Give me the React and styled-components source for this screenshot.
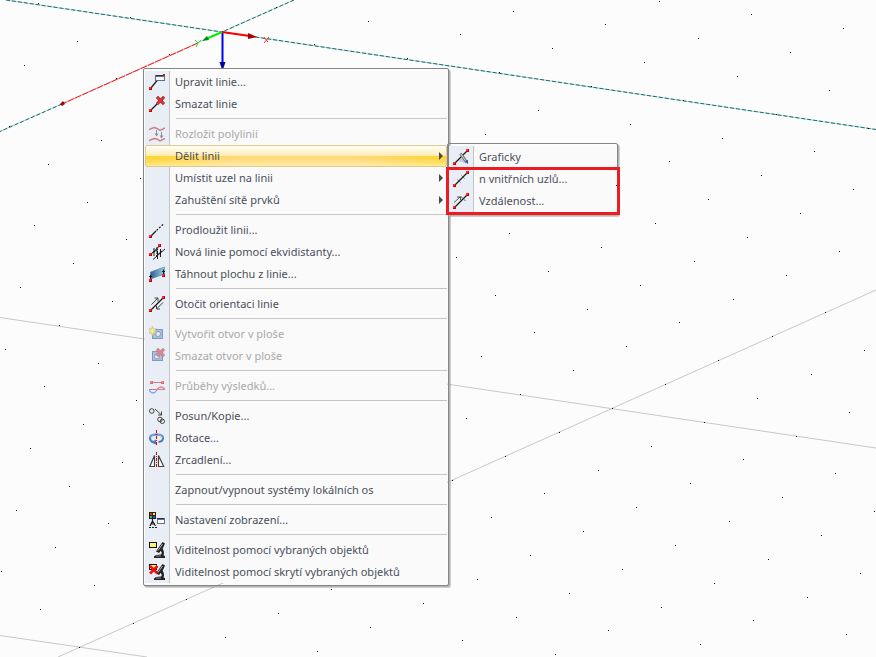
import React, { useState } from "react";
import styled, { createGlobalStyle } from "styled-components";

const GlobalStyle = createGlobalStyle`
  * {
    box-sizing: border-box;
  }
  body {
    margin: 0;
    background: #fcfcfc;
    font-family: "Noto Sans", "Open Sans", sans-serif;
    font-size: 11px;
  }
`;

const Workspace = styled.main`
  position: relative;
  min-height: 100vh;
  overflow: hidden;
  background: #fcfcfc;
`;

const Scene = styled.svg`
  position: absolute;
  top: 0;
  left: 0;
  width: 100%;
  height: 100%;
`;

const MenuPanel = styled.div`
  position: absolute;
  top: ${(p) => p.$top}px;
  left: ${(p) => p.$left}px;
  min-width: ${(p) => p.$minWidth}px;
  padding: 2px 1px;
  border: 1px solid #868686;
  border-radius: 2px;
  background: linear-gradient(
      to right,
      #e9edf6 24px,
      #c5c5c5 24px,
      #c5c5c5 25px,
      transparent 25px
    )
    content-box #fafafa;
  box-shadow: 1px 1px 0 #b4b4b4, 2px 2px 0 rgba(0, 0, 0, 0.18);
`;

const Item = styled.button`
  display: flex;
  align-items: center;
  width: 100%;
  height: 22px;
  padding: 0 4px;
  border: 1px solid transparent;
  border-width: 1px 0;
  border-radius: 2px;
  background: none;
  color: #4b4f5a;
  font: inherit;
  line-height: 16px;
  text-align: left;
  white-space: nowrap;

  &:disabled {
    color: #a9a9a9;
  }
  ${(p) =>
    p.$active &&
    `
    border: 1px solid #dccb8e;
    padding: 0 3px;
    background:
      linear-gradient(to bottom, #fffef8, #ffedb5 48%, transparent 48%),
      linear-gradient(to bottom, transparent 60%, rgba(255, 246, 200, 0.6)),
      linear-gradient(to right, #ffd42e, #ffd878 28%, #ffd878 72%, #ffd42e);
  `}
`;

const IconBox = styled.svg`
  flex: none;
  width: 16px;
  height: 16px;
  margin-right: 10px;
  opacity: ${(p) => (p.$dim ? 0.55 : 1)};
`;

const Label = styled.span`
  flex: 1;
`;

const Arrow = styled.svg`
  flex: none;
  width: 4px;
  height: 8px;
`;

const Separator = styled.hr`
  height: 1px;
  margin: 3px 0 4px 31px;
  border: 0;
  background: #c5c5c5;
`;

const Marker = styled.div`
  position: absolute;
  top: 167px;
  left: 446px;
  width: 174px;
  height: 48px;
  border: 3px solid #ed1c24;
  pointer-events: none;
`;

const Node = ({ x, y }) => (
  <g shapeRendering="crispEdges">
    <rect x={x} y={y} width="3" height="3" fill="#c80000" />
    <rect x={x} y={y} width="2" height="2" fill="#ff2a2a" />
  </g>
);

const Line = ({ d, c = "#1c1c1c", w = 1, ...rest }) => (
  <path d={d} stroke={c} strokeWidth={w} fill="none" {...rest} />
);

const Cross = ({ x, y, s = 7 }) => (
  <g>
    <Line d={`M${x} ${y}l${s} ${s}m0 ${-s}l${-s} ${s}`} c="#7d1a1e" w={3} />
    <Line d={`M${x} ${y}l${s} ${s}m0 ${-s}l${-s} ${s}`} c="#e0343a" w={1.8} />
  </g>
);

const Microscope = () => (
  <g>
    <path d="M13.5 0l2.5 1.5-2 4.500-4 5-3-1.500 3-4.500z" fill="#222" />
    <path d="M13.5 2L9 8.500" stroke="#b5b5b5" fill="none" />
    <path d="M13 6q3 3.500 1.500 7.500L16 14v2H5v-1.500l2-1.500 5-.5q1.500-2-.5-4z" fill="#222" />
    <path d="M7 14h5" stroke="#8d8d8d" fill="none" />
  </g>
);

const icons = {
  edit: (
    <>
      <Line d="M1.5 14.5L8.5 6" w={1.2} />
      <g shapeRendering="crispEdges">
        <rect x="6" y="1" width="10" height="6" fill="#666b78" />
        <rect x="7" y="3" width="8" height="3" fill="#f4f6fb" />
        <rect x="7" y="1" width="7" height="1" fill="#303068" />
        <rect x="14" y="0" width="2" height="2" fill="#b3202a" />
      </g>
      <Node x={0} y={13} />
    </>
  ),
  remove: (
    <>
      <Line d="M1.5 14.5L15 1" w={1.2} />
      <Cross x={8} y={1} />
      <Node x={0} y={13} />
    </>
  ),
  explode: (
    <>
      <Line d="M0 3.5L5 1.5l3 1 3 2L16 2M0 14.5l5-2 3 .5 3 2L16 12.5" c="#b5262c" w={1.5} />
      <Line d="M7.5 4v6M12.5 6v6" c="#444" />
      <path d="M5.5 7.500h4l-2 3zM10.5 9.500h4l-2 3z" fill="#444" />
    </>
  ),
  extend: (
    <>
      <Line d="M1.5 14.5L7 9" w={1.2} />
      <Line d="M7.500 8.500L14.5 2" w={1.2} strokeDasharray="2 1.5" />
      <Node x={0} y={13} />
    </>
  ),
  offset: (
    <>
      <Line d="M1.5 10.5L11 1.5M4 15.5L16 5" />
      <Line d="M5 4v8M8 3v7M8.500 7v8M11.5 5v8M3.5 9L9 5M7 12l6-5" />
      <Node x={0} y={9} />
      <Node x={9} y={0} />
    </>
  ),
  extrude: (
    <>
      <defs>
        <linearGradient id="plane">
          <stop offset="0" stopColor="#315a94" />
          <stop offset="1" stopColor="#8fd8f2" />
        </linearGradient>
      </defs>
      <path d="M1.5 6L15.5 1v7L1.5 13z" fill="url(#plane)" stroke="#60788c" strokeWidth=".6" />
      <Line d="M1.5 13V9M0 10.5h3M14.5 8V3.5M13 5.5h3" />
      <Node x={0} y={13} />
      <Node x={13} y={8} />
    </>
  ),
  reverse: (
    <>
      <Line d="M1.5 14.5L14.5 1.5" w={1.2} />
      <Line d="M2.5 8.5L9 2M5.5 2H9v3.5M14 6.5L7.5 13M11 13H7.5V9.5" c="#444" />
      <Node x={0} y={13} />
      <Node x={13} y={0} />
    </>
  ),
  opening: (
    <>
      <rect x="3.5" y="3.5" width="10" height="9" fill="#7596c8" stroke="#37568a" />
      <circle cx="9" cy="8" r="2.5" fill="#e4ebf8" stroke="#37568a" />
      <path d="M3.5 0l1 3 3-.5-2 2.3 2 2.7-3-.8-1.2 2.8-1-2.800L0 7.500l1.3-2.700L0 2.300l2.600.7z" fill="#ffee3c" stroke="#9c8d2b" strokeWidth=".6" />
    </>
  ),
  openingRemove: (
    <>
      <rect x="3.5" y="3.5" width="10" height="9" fill="#7596c8" stroke="#37568a" />
      <circle cx="8" cy="8.500" r="2.5" fill="#e4ebf8" stroke="#37568a" />
      <Cross x={8} y={1} />
    </>
  ),
  results: (
    <>
      <Line d="M1 4.5H15M0 11.5H16" c="#b52a30" />
      <Line d="M0 12q4 6 8 0" c="#3a4cff" w={1.3} />
      <Line d="M8 11.5q4-5 8 0" c="#e53238" w={1.3} />
      <Node x={1} y={3} />
      <Node x={12} y={3} />
    </>
  ),
  move: (
    <>
      <g fill="none" stroke="#444">
        <circle cx="2.8" cy="3" r="2.3" />
        <circle cx="11" cy="11.5" r="2.3" />
        <circle cx="13.3" cy="13.3" r="2.2" />
      </g>
      <Line d="M6 1L12.5 7M12.5 3.5V7H9" c="#444" />
    </>
  ),
  rotate: (
    <>
      <Line d="M4 12Q1 11 1 8q0-3.500 6.500-3.500T14 8q0 3.500-4.500 4" c="#4c7cb8" w={2} />
      <Line d="M1.500 7.500Q2 5 5.500 4.500M9 4.500q4 .5 4.500 3" c="#9dbde3" />
      <path d="M2 12.500l5-3v5z" fill="#4c7cb8" />
      <Line d="M7.5 0V16" c="#e00000" strokeDasharray="3 1 1 1" shapeRendering="crispEdges" />
    </>
  ),
  mirror: (
    <>
      <path d="M.8 14.500L5.500 3.500v11zM14.700 14.500L9.500 3.500v11z" fill="#fff" stroke="#444" strokeWidth="1.2" />
      <Line d="M7.5 0V16" c="#e00000" strokeDasharray="3 1 1 1" shapeRendering="crispEdges" />
    </>
  ),
  display: (
    <g shapeRendering="crispEdges">
      <rect width="7" height="7" fill="#222" />
      <rect x="1" y="1" width="2" height="2" fill="#ff2020" />
      <rect x="4" y="1" width="2" height="2" fill="#fff000" />
      <rect x="1" y="4" width="2" height="2" fill="#18d030" />
      <rect x="4" y="4" width="2" height="2" fill="#3040ff" />
      <Line d="M3.5 7v2L1 14M3.5 9L6.500 14M2 12h4" w={1.2} shapeRendering="auto" />
      <path d="M0 15h2v1H0zM3 15h2v1H3zM6 15h2v1H6z" fill="#222" />
      <rect x="8" y="6" width="8" height="6" fill="#6b7080" />
      <rect x="9" y="8" width="6" height="3" fill="#fff" />
      <rect x="8" y="6" width="7" height="1" fill="#26265c" />
    </g>
  ),
  visible: (
    <>
      <Microscope />
      <rect x=".5" y=".5" width="7" height="5" fill="#fff36b" stroke="#111" />
    </>
  ),
  hidden: (
    <>
      <Microscope />
      <rect x=".5" y=".5" width="7" height="5" fill="#fff36b" stroke="#111" />
      <Line d="M1 2l7.500 7.500M8.500 2L1 9.500" c="#e81418" w={2.6} />
    </>
  ),
  graphic: (
    <>
      <path d="M5 12l6-5 4 8z" fill="#c4cada" />
      <Line d="M1.5 14.5L14.5 1.5" w={1.2} />
      <Line d="M7.5 4.5L13.5 13" c="#777" w={3} />
      <Line d="M7.8 5L13 12.5" c="#d8dae0" />
      <path d="M12 12l3-1v4z" fill="#2c4fa8" />
      <Node x={0} y={13} />
      <Node x={13} y={0} />
    </>
  ),
  divide: (
    <>
      <Line d="M1.5 14.5L14.5 1.5" w={1.2} />
      <Line d="M4.5 8.5l3 3M8.5 4.5l3 3" c="#666" />
      <Node x={0} y={13} />
      <Node x={13} y={0} />
    </>
  ),
  distance: (
    <>
      <Line d="M1.5 14.5L14.5 1.5" w={1.2} />
      <Line d="M1 9.5L7 4M4 4h3.5v3M7.5 3l5 5" c="#555" />
      <Node x={0} y={13} />
      <Node x={13} y={0} />
    </>
  ),
};

const mainItems = [
  { label: "Upravit linie...", icon: "edit" },
  { label: "Smazat linie", icon: "remove" },
  null,
  { label: "Rozložit polylinii", icon: "explode", disabled: true },
  { label: "Dělit linii", sub: true },
  { label: "Umístit uzel na linii", sub: true },
  { label: "Zahuštění sítě prvků", sub: true },
  null,
  { label: "Prodloužit linii...", icon: "extend" },
  { label: "Nová linie pomocí ekvidistanty...", icon: "offset" },
  { label: "Táhnout plochu z linie...", icon: "extrude" },
  null,
  { label: "Otočit orientaci linie", icon: "reverse" },
  null,
  { label: "Vytvořit otvor v ploše", icon: "opening", disabled: true },
  { label: "Smazat otvor v ploše", icon: "openingRemove", disabled: true },
  null,
  { label: "Průběhy výsledků...", icon: "results", disabled: true },
  null,
  { label: "Posun/Kopie...", icon: "move" },
  { label: "Rotace...", icon: "rotate" },
  { label: "Zrcadlení...", icon: "mirror" },
  null,
  { label: "Zapnout/vypnout systémy lokálních os" },
  null,
  { label: "Nastavení zobrazení...", icon: "display" },
  null,
  { label: "Viditelnost pomocí vybraných objektů", icon: "visible" },
  { label: "Viditelnost pomocí skrytí vybraných objektů", icon: "hidden" },
];

const subItems = [
  { label: "Graficky", icon: "graphic" },
  { label: "n vnitřních uzlů...", icon: "divide" },
  { label: "Vzdálenost...", icon: "distance" },
];

// snap points of the work plane
const gridPoints = [];
for (let i = -14; i <= 10; i++) {
  for (let j = -16; j <= 16; j++) {
    const x = Math.floor(612.3 + i * 92.2 + j * 53.25);
    const y = Math.floor(408.4 + i * 13.85 - j * 23.88);
    if (x >= 0 && x < 1920 && y >= 0 && y < 1200) gridPoints.push([x, y]);
  }
}

const Menu = ({ items, active, onPick, ...panel }) => (
  <MenuPanel role="menu" {...panel}>
    {items.map((item, i) =>
      item ? (
        <Item
          key={item.label}
          type="button"
          role="menuitem"
          disabled={item.disabled}
          aria-haspopup={item.sub ? "menu" : undefined}
          $active={active === item.label}
          onClick={() => onPick?.(item)}
        >
          <IconBox viewBox="0 0 16 16" $dim={item.disabled} aria-hidden="true">
            {icons[item.icon]}
          </IconBox>
          <Label>{item.label}</Label>
          {item.sub && (
            <Arrow viewBox="0 0 4 8" aria-hidden="true">
              <path d="M0 0l4 4-4 4z" fill="#454a58" />
            </Arrow>
          )}
        </Item>
      ) : (
        <Separator key={i} />
      )
    )}
  </MenuPanel>
);

const WorkPlane = () => (
  <Scene aria-hidden="true">
    <g stroke="#c8c8c8" fill="none">
      <path d="M0 317.5L876 448M58 657L876 290M0 635.5L147 657" />
      <path d="M6 0L222 32L876 129.5M294 0L222 32L0 131.5" />
    </g>
    <g stroke="#007878" fill="none" strokeDasharray="4 2">
      <path d="M6 0L222 32L876 129.5M294 0L222 32M62 104L0 131.5" />
    </g>
    {gridPoints.map(([x, y]) => (
      <rect key={`${x}-${y}`} x={x} y={y} width="1" height="1" fill="#000" />
    ))}
    <path d="M198 43L62 104" stroke="#ff1010" strokeDasharray="7 1" />
    <path d="M60 104l3-3 2 3-3 2z" fill="#a00010" />
    <path d="M222.5 32V64" stroke="#0000f0" strokeWidth="2" />
    <path d="M219.5 62h6l-2 6h-2z" fill="#0000a8" />
    <path d="M222 32L206 39" stroke="#00f000" strokeWidth="2" />
    <path d="M202 41l5-5 2 4z" fill="#008a18" />
    <path d="M222 32L250 36" stroke="#ff0000" strokeWidth="2" />
    <path d="M248 33l9 4-9 2z" fill="#a80000" />
    <path d="M195 40l3 3 3-3M198 43l-2 4" stroke="#20e820" fill="none" />
    <path d="M264 37l4 5M269 37l-5 6" stroke="#f03030" fill="none" />
  </Scene>
);

const App = () => {
  const [active, setActive] = useState("Dělit linii");

  return (
    <Workspace>
      <GlobalStyle />
      <WorkPlane />
      <Menu
        items={mainItems}
        active={active}
        onPick={(item) => setActive(item.label)}
        $top={68}
        $left={143}
        $minWidth={306}
      />
      {active === "Dělit linii" && (
        <>
          <Menu items={subItems} $top={143} $left={447} $minWidth={171} />
          <Marker />
        </>
      )}
    </Workspace>
  );
};

export default App;
